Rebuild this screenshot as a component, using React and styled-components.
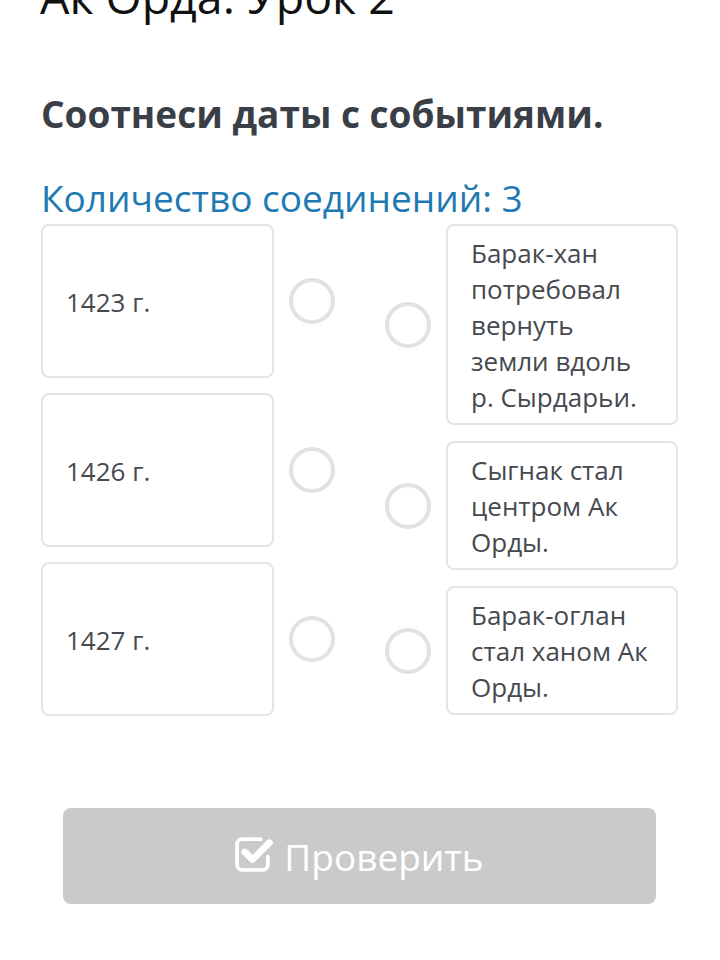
import React from "react";
import styled, { createGlobalStyle } from "styled-components";

const Global = createGlobalStyle`
  html, body { margin: 0; padding: 0; background: #fff; }
  body { font-family: "Open Sans", "Noto Sans", sans-serif; overflow: hidden; }
`;

const Page = styled.div`
  padding: 0 42px 0 41px;
  width: 720px;
  height: 960px;
  box-sizing: border-box;
  overflow: hidden;
`;

const Title = styled.h1`
  margin: -32px 0 0 -1px;
  font-weight: 400;
  font-size: 46.5px;
  line-height: 56px;
  color: #111;
  white-space: nowrap;
`;

const Heading = styled.h2`
  margin: 68px 0 0;
  font-weight: 700;
  font-size: 37px;
  line-height: 44px;
  color: #3a3f47;
  white-space: nowrap;
`;

const Count = styled.div`
  margin-top: 40px;
  font-size: 37px;
  line-height: 44px;
  color: #1f7ab3;
  white-space: nowrap;
`;

const Board = styled.div`
  margin-top: 4px;
  display: flex;
  gap: 50px;
  align-items: flex-start;
`;

const Column = styled.div`
  display: flex;
  flex-direction: column;
  gap: ${(p) => p.$gap}px;
`;

const Row = styled.div`
  display: flex;
  align-items: center;
  gap: 15px;
`;

const Card = styled.div`
  box-sizing: border-box;
  width: ${(p) => p.$w}px;
  min-height: ${(p) => p.$minH || 0}px;
  border: 2px solid #e1e5e8;
  border-radius: 8px;
  padding: 9px 25px 8px 23px;
  display: flex;
  align-items: center;
  font-size: 26px;
  line-height: 36px;
  color: #454a50;
  background: #fff;
`;

const Dot = styled.div`
  box-sizing: border-box;
  width: 46px;
  height: 46px;
  flex: none;
  border-radius: 50%;
  border: 4px solid #dfe3e6;
  background: #fff;
`;

const Button = styled.button`
  margin: 92px 22px 0;
  width: calc(100% - 44px);
  height: 96px;
  border: none;
  border-radius: 8px;
  background: #cacaca;
  color: #fff;
  font-family: "Open Sans", "Noto Sans", sans-serif;
  font-size: 37px;
  display: flex;
  align-items: center;
  justify-content: center;
  gap: 10px;
  padding: 0;
`;

const Label = styled.span`
  line-height: 1;
`;

const IconBox = styled.span`
  display: flex;
  margin-top: -6px;
`;

const CheckIcon = () => (
  <svg width="39" height="37" viewBox="0 0 38 36" fill="none">
    <path
      d="M32 21 V29 a5 5 0 0 1 -5 5 H7 a5 5 0 0 1 -5 -5 V9 a5 5 0 0 1 5 -5 H25"
      stroke="#fff"
      strokeWidth="3.6"
      strokeLinecap="round"
      strokeLinejoin="round"
    />
    <path
      d="M9.5 16.5 L17 24 L33.5 7.5"
      stroke="#fff"
      strokeWidth="6.5"
      strokeLinecap="round"
      strokeLinejoin="round"
    />
  </svg>
);

const dates = ["1423 г.", "1426 г.", "1427 г."];
const events = [
  "Барак-хан потребовал вернуть земли вдоль р. Сырдарьи.",
  "Сыгнак стал центром Ак Орды.",
  "Барак-оглан стал ханом Ак Орды.",
];

export default function App() {
  return (
    <>
      <Global />
      <Page>
        <Title>Ак Орда. Урок 2</Title>
        <Heading>Соотнеси даты с событиями.</Heading>
        <Count>Количество соединений: 3</Count>
        <Board>
          <Column $gap={15}>
            {dates.map((d) => (
              <Row key={d}>
                <Card $w={233} $minH={154}>{d}</Card>
                <Dot />
              </Row>
            ))}
          </Column>
          <Column $gap={16}>
            {events.map((e) => (
              <Row key={e}>
                <Dot />
                <Card $w={232}>{e}</Card>
              </Row>
            ))}
          </Column>
        </Board>
        <Button>
          <IconBox>
            <CheckIcon />
          </IconBox>
          <Label>Проверить</Label>
        </Button>
      </Page>
    </>
  );
}
